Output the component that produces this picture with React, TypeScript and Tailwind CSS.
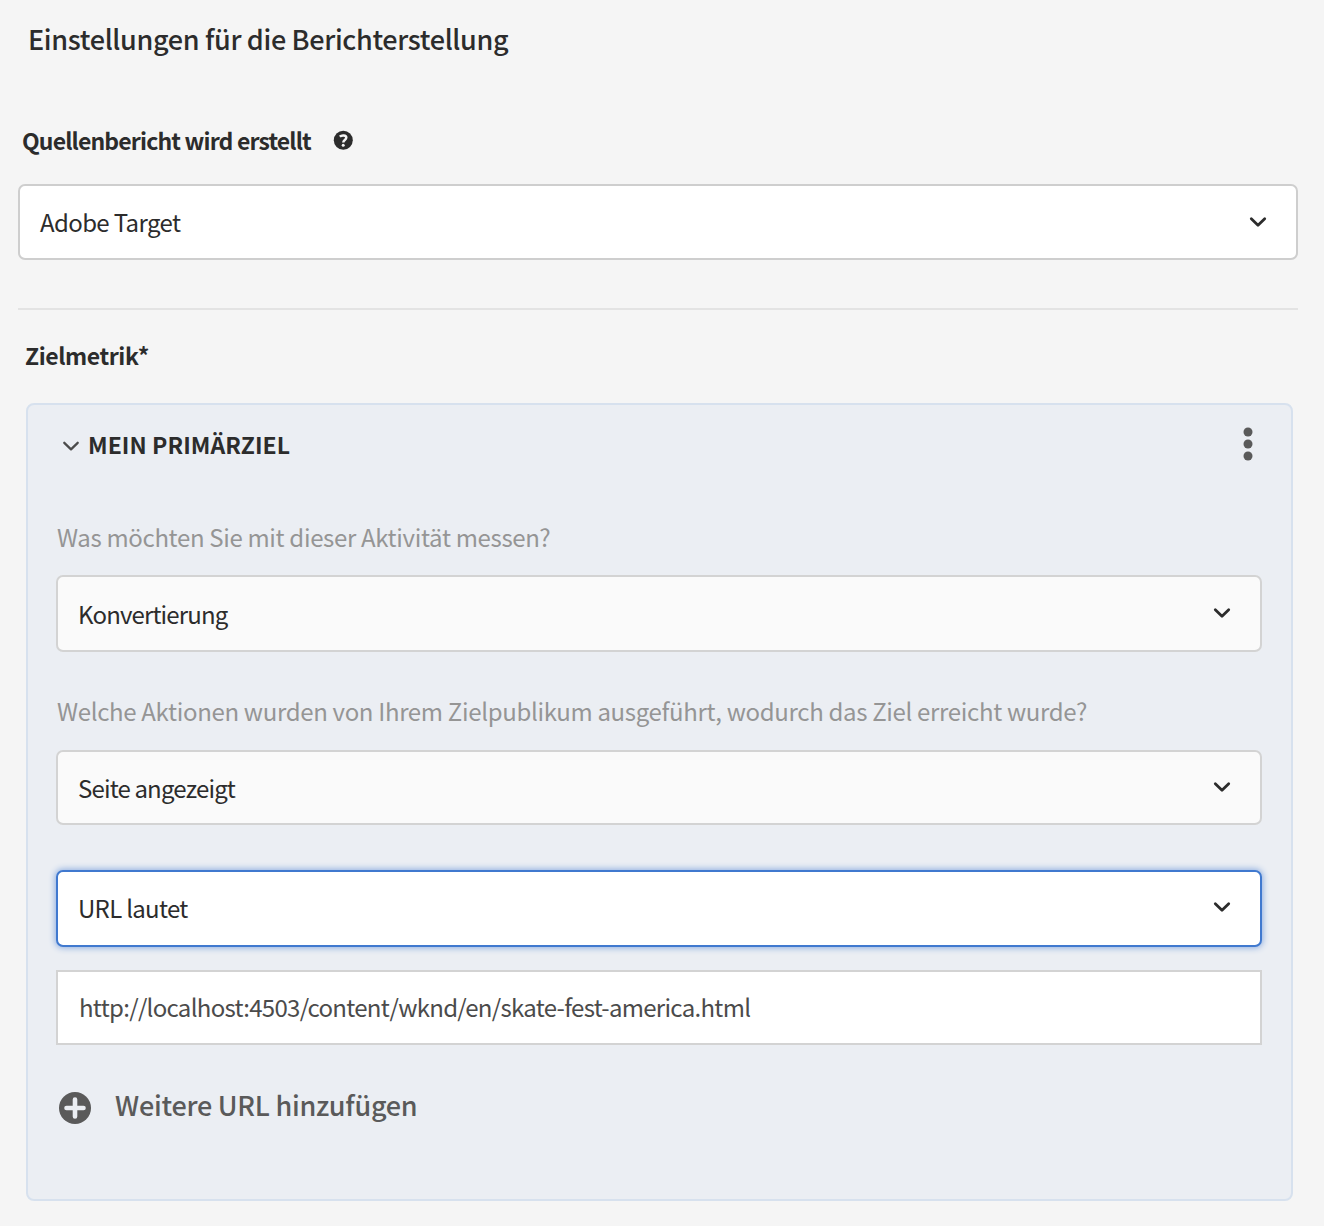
import React from "react";

function Chevron({ className = "", width = 2.8 }: { className?: string; width?: number }) {
  return (
    <svg className={className} width="20" height="14" viewBox="0 0 20 14" fill="none" stroke="currentColor" strokeWidth={width} strokeLinecap="round" strokeLinejoin="round">
      <path d="M3.3 3.8 10 10.3l6.700-6.500" />
    </svg>
  );
}

function Select({ value, className, chevron = "mb-0.5" }: { value: string; className: string; chevron?: string }) {
  return (
    <button type="button" className={`flex w-full items-center justify-between border-2 text-left text-2xl text-[#2c2c2c] ${className}`}>
      <span className="whitespace-nowrap">{value}</span>
      <Chevron className={chevron} />
    </button>
  );
}

export default function App() {
  return (
    <main className="h-[1226px] w-[1324px] overflow-hidden bg-[#f5f5f5] pr-[26px] pl-[18px] font-['Noto_Sans_CJK_SC','Noto_Sans',sans-serif] text-[#2c2c2c]">
      <h1 className="flex h-20 items-center pb-px pl-2.5 text-[27px] font-medium tracking-[-0.34px] whitespace-nowrap"><span>Einstellungen für die Berichterstellung</span></h1>
      <div className="mt-10 flex h-10 items-center pl-1 text-[23px] font-bold whitespace-nowrap">
        <span className="w-[290px] tracking-[-0.85px]">Quellenbericht wird erstellt</span>
        <svg className="ml-[21px]" width="20" height="20" viewBox="0 0 20 20">
          <circle cx="10.300" cy="10.300" r="9.500" fill="#2c2c2c" />
          <path d="M6.800 6.600C8.600 4.900 13.300 4.900 13.300 7.600c0 2.400-3 2.400-3 4.800" fill="none" stroke="#f5f5f5" strokeWidth="2.500" />
          <circle cx="10.200" cy="15.200" r="1.500" fill="#f5f5f5" />
        </svg>
      </div>
      <Select value="Adobe Target" chevron="" className="mt-6 h-[76px] rounded-[7px] border-[#cecece] bg-white pr-[28px] pl-5 tracking-[-0.62px]" />
      <hr className="mt-12 border-t-2 border-[#e3e3e3]" />
      <h2 className="mt-[25px] flex h-10 items-center pl-[7px] text-[23px] font-bold tracking-[-0.42px]"><span>Zielmetrik*</span></h2>
      <section className="mt-7 mr-[5px] ml-2 h-[798px] rounded-lg border-2 border-[#d7e1ee] bg-[#ebeef3] pr-[29px] pl-7">
        <header className="flex h-[78px] items-center pl-1 text-[23px] font-bold">
          <Chevron width={2.3} className="mt-1 mr-[7px] ml-px text-[#4b4b4b]" />
          <span className="tracking-[0.05px]">MEIN PRIMÄRZIEL</span>
          <svg className="mr-[9px] ml-auto" width="10" height="34" viewBox="0 0 10 34" fill="#5a5a5a">
            <circle cx="5" cy="5" r="4.500" />
            <circle cx="5" cy="17" r="4.500" />
            <circle cx="5" cy="29" r="4.500" />
          </svg>
        </header>
        <p className="mt-[34px] flex h-10 items-center pl-px text-2xl tracking-[-0.34px] whitespace-nowrap text-[#959595]"><span>Was möchten Sie mit dieser Aktivität messen?</span></p>
        <Select value="Konvertierung" className="mt-[18px] h-[77px] rounded-[7px] border-[#d3d3d3] bg-[#fafafa] pr-[28px] pl-5 tracking-[-0.85px]" />
        <p className="mt-[39px] flex h-10 items-center pl-px text-2xl tracking-[-0.33px] whitespace-nowrap text-[#959595]"><span>Welche Aktionen wurden von Ihrem Zielpublikum ausgeführt, wodurch das Ziel erreicht wurde?</span></p>
        <Select value="Seite angezeigt" className="mt-[19px] h-[75px] rounded-[7px] border-[#d3d3d3] bg-[#fafafa] pr-[28px] pl-5 tracking-[-0.85px]" />
        <Select value="URL lautet" className="mt-[45px] h-[77px] rounded-[7px] border-[#4079cf] bg-white pr-[28px] pb-px pl-5 tracking-[-0.7px] shadow-[0_0_6px_1px_#8daee0]" />
        <div className="mt-[23px] flex h-[75px] items-center border-2 border-[#d3d3d3] bg-white pb-px pl-[21px] text-2xl tracking-[-0.7px] whitespace-nowrap text-[#4b4b4b]">
          <span>http://localhost:4503/content/wknd/en/skate-fest-america.html</span>
        </div>
        <button type="button" className="mt-10 flex h-10 items-center pl-[3px] text-[27px] font-medium tracking-[-0.25px] whitespace-nowrap text-[#5a5a5a]">
          <svg className="mt-[5px] mr-6" width="32" height="32" viewBox="0 0 32 32">
            <circle cx="16" cy="16" r="16" fill="#5a5a5a" />
            <path d="M16 7.500v17M7.500 16h17" stroke="#ebeef3" strokeWidth="4.600" strokeLinecap="round" />
          </svg>
          <span>Weitere URL hinzufügen</span>
        </button>
      </section>
    </main>
  );
}
